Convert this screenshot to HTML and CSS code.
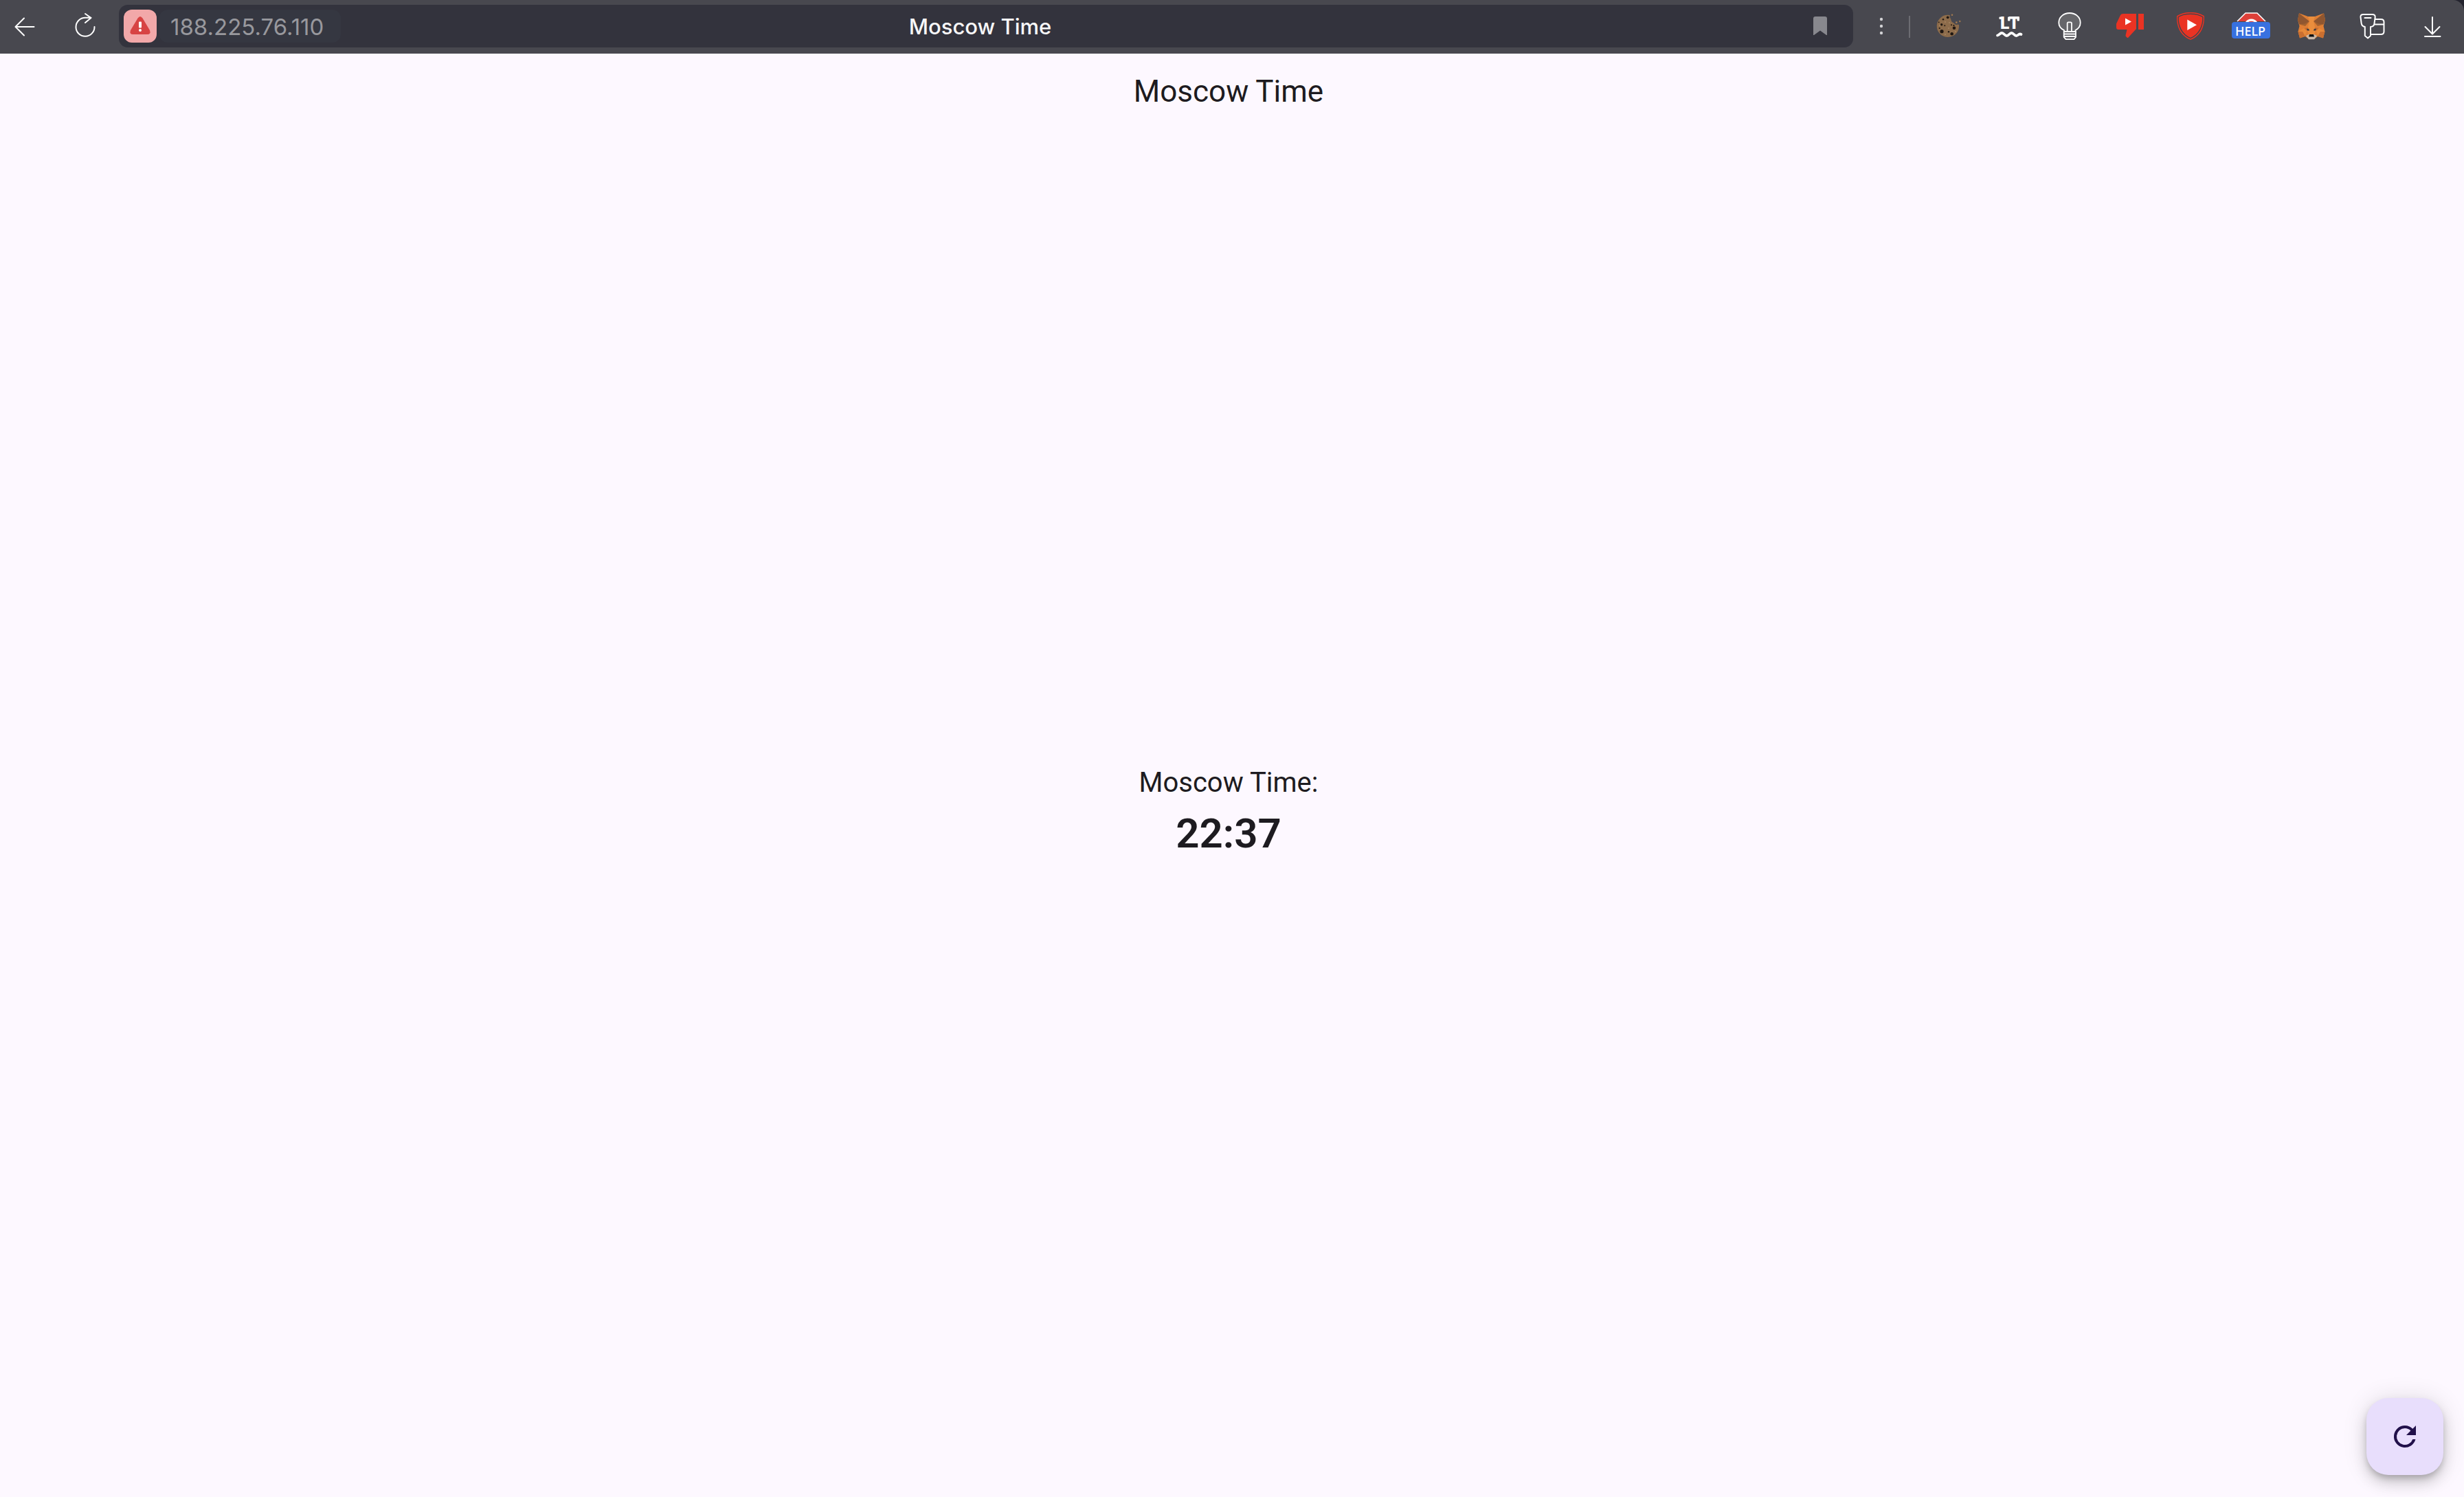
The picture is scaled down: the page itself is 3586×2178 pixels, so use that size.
FILE: index.html
```html
<!DOCTYPE html>
<html lang="en">
<head>
<meta charset="utf-8">
<meta name="viewport" content="width=device-width, initial-scale=1">
<title>Moscow Time</title>
<link rel="stylesheet" href="styles.css">
</head>
<body>
<div class="window">
  <header class="toolbar">
    <nav class="navigation" aria-label="History">
      <button class="tool" type="button" aria-label="Back">
        <svg class="icon line" viewBox="0 0 48 48"><path d="M37.500 24H11M23 11.500L10.500 24L23 36.500"/></svg>
      </button>
      <button class="tool" type="button" aria-label="Reload page">
        <svg class="icon line" viewBox="0 0 48 48"><path d="M37.500 24A13.500 13.500 0 1 1 24 10.800H32.500M24 5L32.500 11L24 18"/></svg>
      </button>
    </nav>

    <form class="address">
      <div class="address-start">
        <button class="security" type="button" aria-label="Connection is not secure">
          <svg class="icon" viewBox="0 0 48 48">
            <path fill="#d74343" d="M20.500 12.500Q24 7.500 27.500 12.500L38 30Q40 36 34.500 36H13.500Q8 36 10 30Z"/>
            <rect x="22" y="17.500" width="4" height="9" rx="1" fill="#fff"/>
            <circle cx="24" cy="30" r="2" fill="#fff"/>
          </svg>
        </button>
        <input class="host" type="text" value="188.225.76.110" aria-label="Address">
      </div>
      <span class="page-name">Moscow Time</span>
      <button class="bookmark" type="button" aria-label="Bookmark">
        <svg class="icon" viewBox="0 0 48 48"><path fill="#88888e" d="M14 13Q14 10 17 10H31Q34 10 34 13V37H33L24 30.500L15 37H14Z"/></svg>
      </button>
    </form>

    <button class="tool" type="button" aria-label="Page menu">
      <svg class="icon" viewBox="0 0 48 48" fill="#d2d2d5"><circle cx="24" cy="13" r="2.200"/><circle cx="24" cy="23" r="2.200"/><circle cx="24" cy="33" r="2.200"/></svg>
    </button>
    <span class="divider"></span>

    <div class="extensions">
      <button class="tool" type="button" aria-label="Cookies">
        <svg class="icon" viewBox="0 0 48 48">
          <path fill="#8d6c4b" d="M26 7C24.500 10 27 11 27.500 14C28 18 31 17.500 33 20C35 22 37 20 39 21A16.200 16.200 0 1 1 26 7Z"/>
          <g fill="#a78460"><circle cx="19" cy="17" r="1"/><circle cx="24" cy="26" r="1"/><circle cx="19" cy="35" r="1"/><circle cx="11" cy="22" r="1"/><circle cx="34" cy="31" r="1"/><circle cx="25" cy="18" r="1"/></g>
          <g fill="#1f1712"><circle cx="22.700" cy="10.300" r="1.900"/><circle cx="16" cy="13.300" r="1.200"/><circle cx="13.700" cy="20.700" r="1.700"/><circle cx="9.700" cy="17.300" r=".9"/><circle cx="14" cy="30.700" r="2.600"/><circle cx="10.700" cy="26" r="1.100"/><circle cx="32" cy="25.700" r="2.300"/><circle cx="31.500" cy="22" r="1.100"/><circle cx="28.700" cy="34.300" r="2.300"/><circle cx="18.300" cy="22.300" r="1"/><circle cx="24" cy="31.300" r="1.200"/><circle cx="28" cy="21.300" r="1"/></g>
          <g fill="#a0784f"><circle cx="29" cy="6.700" r="1.300"/><circle cx="35.300" cy="17.700" r="1.400"/><circle cx="40.300" cy="16" r="1.200"/></g>
        </svg>
      </button>
      <button class="tool" type="button" aria-label="LanguageTool">
        <svg class="icon" viewBox="0 0 48 48">
          <g fill="#fff"><text class="lt" x="11" y="27">L</text><text class="lt" x="23" y="27">T</text>
          <rect x="9.500" y="9.500" width="6" height="3.500" rx="1"/><rect x="22" y="9.500" width="3.500" height="6" rx="1"/><rect x="35.500" y="9.500" width="3.500" height="6" rx="1"/></g>
          <path fill="none" stroke="#fff" stroke-width="3.800" stroke-linecap="round" d="M7 36.500C10 36 10.500 33 13.500 33S17.500 37 20.500 37S24.500 33 27.500 33S31.500 37 34.500 37S38 33 41.500 35"/>
        </svg>
      </button>
      <button class="tool" type="button" aria-label="Dark mode">
        <svg class="icon" viewBox="0 0 48 48" stroke="#fff" stroke-width="1.800">
          <path fill="#66666a" d="M16 31V29C10.500 26.500 8.300 23 8.300 18C8.300 9.500 15.500 4 24 4S39.700 9.500 39.700 18C39.700 23 37.500 26.500 32.500 29V31Z"/>
          <path fill="#66666a" d="M20.700 30V19Q20.700 17.300 22.300 17.300H25.300Q27 17.300 27 19V30"/>
          <path fill="#55555b" d="M15.700 31H33V39L30.500 42.200H18.500L15.700 39Z"/>
          <path d="M16 34.500H33M16 38H33"/>
        </svg>
      </button>
      <button class="tool" type="button" aria-label="Return dislikes">
        <svg class="icon" viewBox="0 0 48 48" fill="#ea3323">
          <path d="M14 5H33V27L21.500 39.500Q20.500 40.500 19.500 39.500L18 38Q17.300 37 17.600 36L19.500 28H7Q4 28 4 25V19.500L10 7Q11 5 14 5Z"/>
          <rect x="36" y="5" width="8" height="23"/>
          <path fill="#fff" d="M17 11.500L26 16.500L17 21.500Z"/>
        </svg>
      </button>
      <button class="tool" type="button" aria-label="Video shield">
        <svg class="icon" viewBox="0 0 48 48">
          <path fill="#ea3323" d="M24 3C33 3 39.500 5 44 8.500C44.500 23 39.500 37 24 43C8.500 37 3.500 23 4 8.500C8.500 5 15 3 24 3Z"/>
          <path fill="#ea3323" stroke="#48434a" stroke-width="1.400" d="M24 5.200C32 5.200 38 7 42 9.800C42.200 22 37.500 35 24 40.700C10.500 35 5.800 22 6 9.800C10 7 16 5.200 24 5.200Z"/>
          <path fill="#fff" d="M19.300 13.500L33 21.200L19.300 29Z"/>
        </svg>
      </button>
      <button class="tool" type="button" aria-label="Ad blocker help">
        <svg class="icon" viewBox="0 0 48 48">
          <path fill="#de4039" stroke="#fff" stroke-width="1.500" d="M4 16L16 4H33L45 16"/>
          <path fill="#fff" d="M16 17Q19 12.500 24.500 12.500T33 17Z"/>
          <path fill="#de4039" d="M20 17Q24 14.500 29 17Z"/>
          <rect x="-4" y="17" width="56" height="24" rx="4" fill="#3871e0"/>
          <text class="help" x="23" y="37">HELP</text>
        </svg>
      </button>
      <button class="tool" type="button" aria-label="MetaMask">
        <svg class="icon" viewBox="0 0 48 48">
          <path fill="#df7f35" d="M6 4.300L19 9H29L42 4.300L44 14L41.500 23L43.500 31L41 40.500L33 38L28 42H20L15 38L7 40.500L4.500 31L6.500 23L4 14Z"/>
          <path fill="#8f5630" d="M6 4.300L21 16L14 21L6.500 20.500L4 14ZM42 4.300L27 16L34 21L41.500 20.500L44 14Z"/>
          <path fill="#a3622f" d="M6.500 20.500L14 19.500L21 16L15 23ZM41.500 20.500L34 19.500L27 16L33 23Z"/>
          <path fill="#ea8e3d" d="M19 9H29L27 16L30 29L28 35H20L18 29L21 16Z"/>
          <path fill="#ca6f30" d="M13 26L19 25L21.500 30L16 29ZM35 26L29 25L26.500 30L32 29ZM4.500 31H15L16 37L7 40.500ZM43.500 31H33L32 37L41 40.500Z"/>
          <path fill="#e88a3a" d="M4.500 31L13 26L17 30L15 38L11 31ZM43.500 31L35 26L31 30L33 38L37 31Z"/>
          <path fill="#333a44" d="M17 26.500L20.500 27.500V29.500H18ZM31 26.500L27.500 27.500V29.500H30Z"/>
          <path fill="#c9b9aa" d="M16 37L20.500 35H27.500L32 37L28 42.300H20Z"/>
          <path fill="#111" d="M21 35H27L28 38.500H20Z"/>
        </svg>
      </button>
      <button class="tool" type="button" aria-label="Passwords and cards">
        <svg class="icon line" viewBox="0 0 48 48"><path d="M11.500 6H24.500Q29 6 28.700 10L27.500 19Q27 24 22 24V37L18 40.500L13.800 37V24Q9.500 23.500 8.700 19L7.500 10Q7 6 11.500 6ZM13.500 11H22.500M29 13H37Q41.500 13 41.500 17V31Q41.500 35 37 35H22.500M28 20.500H41"/></svg>
      </button>
      <button class="tool" type="button" aria-label="Downloads">
        <svg class="icon line" viewBox="0 0 48 48"><path d="M24 10V34M13.500 24L24 34.500L34.500 24M13 38H35.500"/></svg>
      </button>
    </div>
  </header>

  <div class="page">
    <header class="app-bar"><h1 class="app-title">Moscow Time</h1></header>
    <main class="clock">
      <p class="clock-label">Moscow Time:</p>
      <time class="clock-time" datetime="22:37">22:37</time>
    </main>
    <button class="refresh" type="button" aria-label="Refresh time">
      <svg class="icon" viewBox="0 0 24 24"><path fill="#21104a" d="M17.650 6.350A7.960 7.960 0 0 0 12 4a8 8 0 1 0 7.730 10h-2.080A6 6 0 1 1 12 6c1.660 0 3.140.69 4.220 1.780L13 11h7V4z"/></svg>
    </button>
  </div>
</div>
</body>
</html>
```
FILE: styles.css
```css
* {
  box-sizing: border-box;
}

body {
  margin: 0;
  background: #23232e;
}

button {
  padding: 0;
  border: 0;
  background: none;
  cursor: pointer;
}

.window {
  display: flex;
  flex-direction: column;
  min-height: 100vh;
}

/* Browser toolbar */
.toolbar {
  display: flex;
  align-items: center;
  height: 78px;
  padding: 0 22px 0 12px;
  border-top-right-radius: 16px;
  background: #48484f;
}

.navigation,
.extensions {
  display: flex;
  gap: 40px;
}

.tool {
  flex: none;
  width: 48px;
  height: 48px;
}

.icon {
  display: block;
  width: 48px;
  height: 48px;
  overflow: visible;
}

.line {
  fill: none;
  stroke: #fff;
  stroke-width: 2;
  stroke-linecap: round;
  stroke-linejoin: round;
}

.lt {
  font: 800 24px Inter, sans-serif;
}

.help {
  fill: #fff;
  font: 500 18px "Noto Sans", sans-serif;
  text-anchor: middle;
}

.address {
  display: grid;
  grid-template-columns: 1fr auto 1fr;
  align-items: center;
  flex: 1;
  height: 62px;
  margin: 0 17px 2px 25px;
  padding: 0 24px 0 7px;
  border-radius: 13px;
  background: #33333d;
}

.address-start {
  display: flex;
  gap: 4px;
}

.security {
  width: 48px;
  height: 48px;
  border-radius: 12px;
  background: #f2a8a9;
}

.host {
  width: 264px;
  height: 48px;
  padding: 2px 16px 0;
  border: 0;
  border-radius: 12px;
  outline: 0;
  background: #353741;
  color: #98989d;
  font: 400 33px Inter, sans-serif;
}

.page-name {
  padding-top: 2px;
  color: #f7f7f8;
  font: 500 31px/48px Inter, sans-serif;
}

.bookmark {
  justify-self: end;
  width: 48px;
  height: 48px;
}

.divider {
  width: 2px;
  height: 32px;
  margin: 0 32px 0 16px;
  background: #6c6c72;
}

/* Clock page */
.page {
  position: relative;
  display: flex;
  flex: 1;
  flex-direction: column;
  padding-right: 10px;
  background: #fdf8ff;
  color: #1d1b20;
  font-family: Roboto, sans-serif;
}

.app-bar {
  display: flex;
  align-items: center;
  justify-content: center;
  height: 112px;
  padding-bottom: 2px;
}

.app-title {
  margin: 0;
  font-size: 44px;
  font-weight: 400;
  line-height: 56px;
}

.clock {
  display: flex;
  flex: 1;
  flex-direction: column;
  align-items: center;
  justify-content: center;
  gap: 2px;
}

.clock-label {
  margin: 0;
  font-size: 40px;
  line-height: 56px;
}

.clock-time {
  font-size: 60px;
  font-weight: 600;
  line-height: 88px;
}

.refresh {
  position: absolute;
  right: 30px;
  bottom: 32px;
  display: grid;
  place-items: center;
  width: 112px;
  height: 112px;
  border-radius: 32px;
  background: #e8defc;
  box-shadow: 0 6px 10px -2px rgba(0, 0, 0, .2), 0 12px 20px rgba(0, 0, 0, .14), 0 2px 36px rgba(0, 0, 0, .12);
}
```
